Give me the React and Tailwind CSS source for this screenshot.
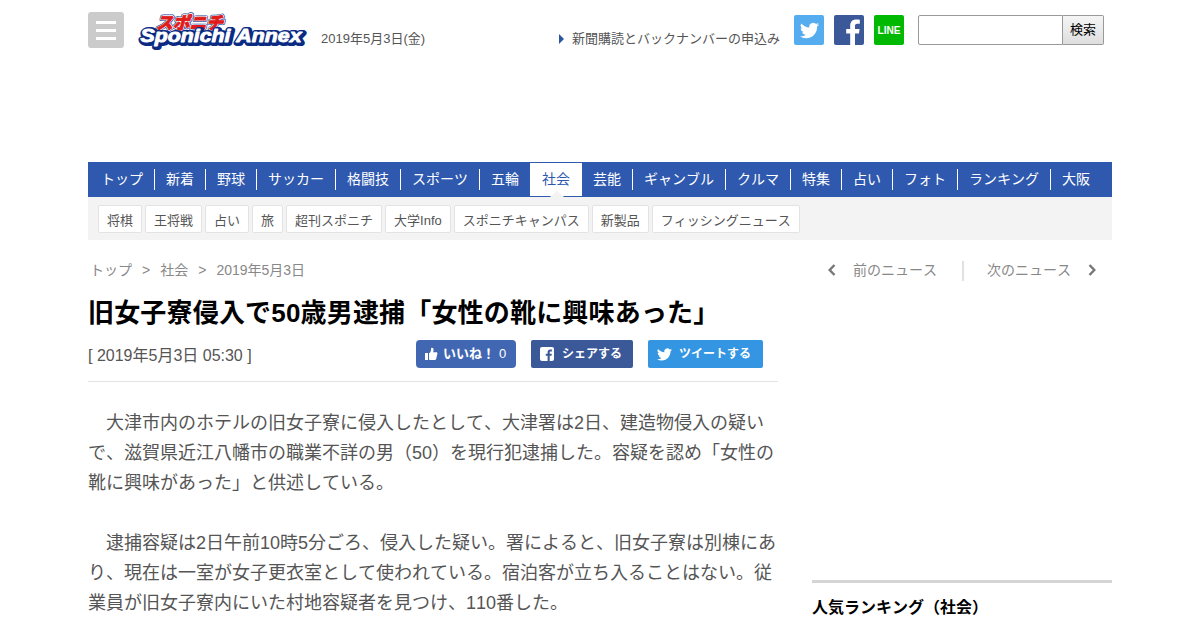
import React from 'react';

const navItems = [
    'トップ', '新着', '野球', 'サッカー', '格闘技', 'スポーツ', '五輪', '社会', '芸能',
    'ギャンブル', 'クルマ', '特集', '占い', 'フォト', 'ランキング', '大阪'
];

const subItems = [
    '将棋', '王将戦', '占い', '旅', '超刊スポニチ', '大学Info', 'スポニチキャンパス', '新製品', 'フィッシングニュース'
];

const paragraphs = [
    [
        '　大津市内のホテルの旧女子寮に侵入したとして、大津署は2日、建造物侵入の疑い',
        'で、滋賀県近江八幡市の職業不詳の男（50）を現行犯逮捕した。容疑を認め「女性の',
        '靴に興味があった」と供述している。'
    ],
    [
        '　逮捕容疑は2日午前10時5分ごろ、侵入した疑い。署によると、旧女子寮は別棟にあ',
        'り、現在は一室が女子更衣室として使われている。宿泊客が立ち入ることはない。従',
        '業員が旧女子寮内にいた村地容疑者を見つけ、110番した。'
    ]
];

const TwitterBird = ({ className }) => (
    <svg viewBox="0 0 24 24" fill="white" className={className}>
        <path d="M23.95 4.57a10 10 0 0 1-2.82.77 4.96 4.96 0 0 0 2.16-2.72c-.95.55-2 .95-3.13 1.18a4.92 4.92 0 0 0-8.38 4.48C7.69 8.1 4.07 6.13 1.64 3.16a4.92 4.92 0 0 0 1.52 6.57 4.9 4.9 0 0 1-2.23-.61v.06a4.92 4.92 0 0 0 3.95 4.83 5 5 0 0 1-2.21.08 4.94 4.94 0 0 0 4.6 3.42A9.87 9.87 0 0 1 0 19.54a13.99 13.99 0 0 0 7.55 2.21c9.05 0 14-7.5 14-13.98 0-.21 0-.42-.02-.63a9.94 9.94 0 0 0 2.46-2.55z" />
    </svg>
);

const Logo = () => (
    <svg width="172" height="50" viewBox="0 -12 172 50" className="ml-[13px] shrink-0 overflow-visible">
        <g fontFamily="'Noto Sans CJK JP', sans-serif" fontWeight="900" fontSize="17" transform="translate(19 16.5) skewX(-14)" strokeLinejoin="round">
            <text textLength="67" lengthAdjust="spacingAndGlyphs" stroke="#1d3f94" strokeWidth="3.6" fill="#1d3f94">スポニチ</text>
            <text textLength="67" lengthAdjust="spacingAndGlyphs" stroke="white" strokeWidth="2.2" fill="white">スポニチ</text>
            <text textLength="67" lengthAdjust="spacingAndGlyphs" stroke="#e01b1b" strokeWidth="0.9" fill="#e01b1b">スポニチ</text>
        </g>
        <g fontFamily="'Liberation Sans', Arial, sans-serif" fontWeight="700" fontStyle="italic" fontSize="19" strokeLinejoin="round">
            <text x="4.5" y="30.5" textLength="161" lengthAdjust="spacingAndGlyphs" stroke="#0b2b83" strokeWidth="6" fill="#0b2b83">Sponichi Annex</text>
            <text x="3.5" y="29.5" textLength="161" lengthAdjust="spacingAndGlyphs" stroke="white" strokeWidth="0.9" fill="white">Sponichi Annex</text>
        </g>
    </svg>
);

const Header = () => (
    <header className="flex h-[162px] items-start">
        <div className="mt-3 flex h-9 w-9 shrink-0 flex-col items-center justify-center gap-[5px] rounded-[3px] bg-[#cbcbcb] pt-px">
            <span className="h-[3px] w-5 bg-white"></span>
            <span className="h-[3px] w-5 bg-white"></span>
            <span className="h-[3px] w-5 bg-white"></span>
        </div>
        <Logo />
        <p className="ml-3 mt-[29px] w-[238px] whitespace-nowrap text-[13px] leading-5 text-[#555]">2019年5月3日(金)</p>
        <div className="mt-[29px] flex h-5 w-[235px] shrink-0 items-center text-[13px] text-[#555]">
            <svg width="5" height="10" viewBox="0 0 5 10" className="mr-2" fill="#2b56a0"><path d="M0 0L5 5L0 10Z" /></svg>
            <span className="whitespace-nowrap">新聞購読とバックナンバーの申込み</span>
        </div>
        <div className="mt-[15px] flex shrink-0 gap-2.5">
            <div className="flex h-[30px] w-[30px] items-center justify-center rounded-[2px] bg-[#55acee]">
                <TwitterBird className="h-[19px] w-[19px]" />
            </div>
            <svg width="30" height="30" viewBox="0 0 30 30">
                <rect width="30" height="30" rx="2" fill="#3b5998" />
                <path d="M16.2 30V18.5h-4v-4.6h4v-3.3c0-4 2.4-6.1 6-6.1 1.7 0 3.1.1 3.6.2v4.1h-2.5c-1.9 0-2.3.9-2.3 2.3v2.8h4.6l-.6 4.6h-4V30z" fill="white" />
            </svg>
            <svg width="30" height="30" viewBox="0 0 30 30">
                <rect width="30" height="30" rx="2" fill="#00b900" />
                <text x="3.5" y="19.3" fontSize="11.5" fontWeight="700" fill="white" textLength="23" lengthAdjust="spacingAndGlyphs">LINE</text>
            </svg>
        </div>
        <div className="ml-3.5 mt-[15px] flex h-[30px] shrink-0">
            <input type="text" className="w-[145px] rounded-l-[2px] border border-[#999] bg-white" />
            <button className="w-[41px] rounded-r-[2px] border border-l-0 border-[#999] bg-linear-to-b from-[#f5f5f5] to-[#dedede] text-[13px] text-black">検索</button>
        </div>
    </header>
);

const GlobalNav = () => (
    <nav>
        <ul className="flex h-[35px] bg-[#2f59ae] pl-0.5 pt-px text-[14px] text-white">
            {navItems.map((item) => (
                item === '社会' ? (
                    <li key={item} className="relative -ml-px h-[33px] w-[52px] bg-white pl-3 leading-[33px] text-[#2f59ae]">
                        {item}
                        <span className="absolute -bottom-px left-5 border-x-[7px] border-b-[6px] border-x-transparent border-b-[#f3f3f3]"></span>
                    </li>
                ) : (
                    <li key={item} className={`mt-1.5 h-[21px] whitespace-nowrap px-[11px] leading-[21px] ${item === '大阪' ? '' : 'border-r border-white'}`}>{item}</li>
                )
            ))}
        </ul>
        <ul className="flex h-[43px] gap-[3px] bg-[#f3f3f3] pl-2.5 pt-2">
            {subItems.map((item) => (
                <li key={item} className="h-7 whitespace-nowrap rounded-[2px] border border-[#e3e3e3] bg-white px-2 text-[13px] leading-[29px] text-[#555]">{item}</li>
            ))}
        </ul>
    </nav>
);

const Article = () => (
    <article className="w-[690px] shrink-0">
        <div className="flex h-5 items-center gap-2.5 pl-0.5 text-[14px] leading-5 text-[#888]">
            <span>トップ</span>
            <span>&gt;</span>
            <span>社会</span>
            <span>&gt;</span>
            <span>2019年5月3日</span>
        </div>
        <h1 className="mt-[13px] whitespace-nowrap text-[26px] font-bold leading-10 tracking-[0.18px] text-black">旧女子寮侵入で50歳男逮捕「女性の靴に興味あった」</h1>
        <div className="mt-[7px] flex h-[42px] border-b border-[#e3e3e3]">
            <p className="w-[328px] pt-1 text-[16px] leading-6 text-[#555]">[ 2019年5月3日 05:30 ]</p>
            <div className="flex h-7 w-[100px] items-center rounded-[4px] bg-[#4267b2] pl-2 text-[13px] text-white">
                <svg width="14" height="14" viewBox="0 0 14 14" fill="white" className="mr-[5px]">
                    <path d="M1 6h3v7H1zM5 6.2C6.4 5.5 7 4 7 2.4 7 1.2 7.4.8 8 .8c1 0 1.6.9 1.6 2.1 0 1-.3 1.7-.6 2.4h3.2c.9 0 1.4.7 1.2 1.4l-1.2 5c-.2.8-.8 1.3-1.6 1.3H7C6 13 5.5 12.7 5 12.4z" />
                </svg>
                <span className="whitespace-nowrap font-bold">いいね！</span>
                <span className="ml-1">0</span>
            </div>
            <div className="ml-[15px] flex h-7 w-[102px] items-center rounded-[2px] bg-[#3b5998] pl-[9px] text-[12px] font-bold text-white">
                <svg width="14" height="14" viewBox="0 0 14 14" className="mr-2">
                    <rect width="14" height="14" rx="2" fill="white" />
                    <path d="M7.6 14V8.8H5.8V6.7h1.8V5.2c0-1.8 1.1-2.8 2.7-2.8h1.6v2h-1c-1 0-1.2.5-1.2 1.1v1.2h2.1l-.3 2.1H9.7V14z" fill="#3b5998" />
                </svg>
                <span className="whitespace-nowrap">シェアする</span>
            </div>
            <div className="ml-[15px] flex h-7 w-[115px] items-center rounded-[2px] bg-[#3496e2] pl-[9px] text-[12px] font-bold text-white">
                <TwitterBird className="mr-[7px] h-[15px] w-[15px]" />
                <span className="whitespace-nowrap">ツイートする</span>
            </div>
        </div>
        <div className="mt-[26px] flex flex-col gap-[30px] text-[18px] leading-[30px] text-[#555]">
            {paragraphs.map((lines, i) => (
                <p key={i}>
                    {lines.map((line) => (
                        <span key={line} className="block whitespace-pre">{line}</span>
                    ))}
                </p>
            ))}
        </div>
    </article>
);

const Sidebar = () => (
    <aside className="w-[300px]">
        <div className="flex h-5 items-center pl-4 text-[14px] text-[#888]">
            <svg width="8" height="12" viewBox="0 0 8 12" fill="none" stroke="#777" strokeWidth="2.4" className="mr-[17px]"><path d="M6.5 1L1.7 6l4.8 5" /></svg>
            <span className="whitespace-nowrap">前のニュース</span>
            <span className="ml-[25px] mr-[23px] mt-0.5 h-5 w-0.5 bg-[#e0e0e0]"></span>
            <span className="whitespace-nowrap">次のニュース</span>
            <svg width="8" height="12" viewBox="0 0 8 12" fill="none" stroke="#777" strokeWidth="2.4" className="ml-[17px]"><path d="M1.5 1l4.8 5-4.8 5" /></svg>
        </div>
        <section className="mt-[300px] border-t-[3px] border-[#d5d5d5]">
            <h2 className="mt-[13px] text-[16px] font-bold leading-6 text-black">人気ランキング（社会）</h2>
        </section>
    </aside>
);

const App = () => {
    return (
        <div className="h-[630px] overflow-hidden bg-white font-['Liberation_Sans','Noto_Sans_CJK_JP',sans-serif] [font-kerning:none]">
            <div className="mx-auto w-[1024px]">
                <Header />
                <GlobalNav />
                <main className="flex gap-[34px] pt-5">
                    <Article />
                    <Sidebar />
                </main>
            </div>
        </div>
    );
};

export default App;
